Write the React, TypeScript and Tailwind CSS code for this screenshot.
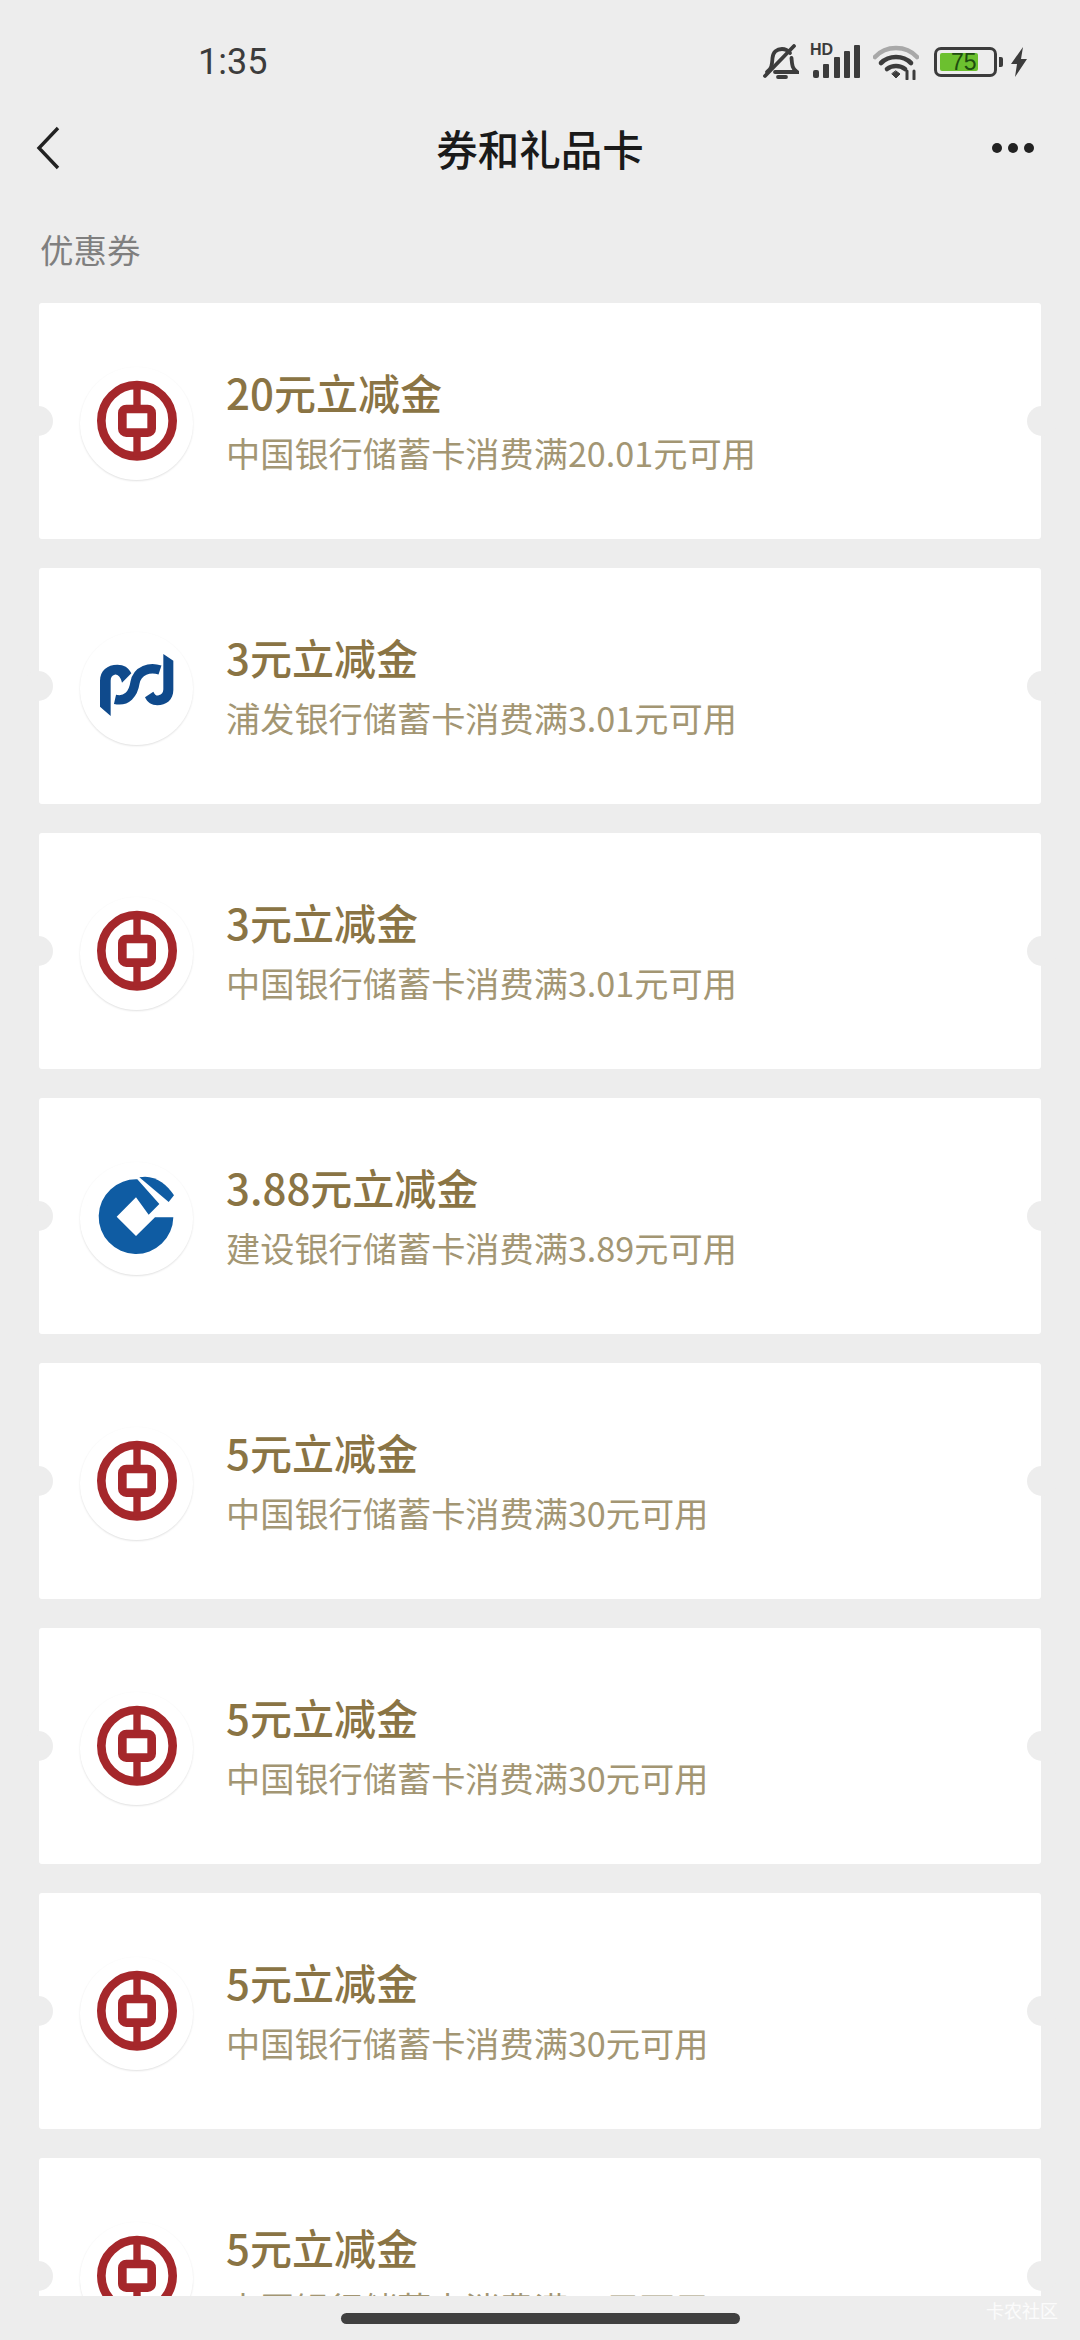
type Bank = "boc" | "spdb" | "ccb"

const coupons: { bank: Bank; title: string; desc: string }[] = [
    { bank: "boc", title: "20元立减金", desc: "中国银行储蓄卡消费满20.01元可用" },
    { bank: "spdb", title: "3元立减金", desc: "浦发银行储蓄卡消费满3.01元可用" },
    { bank: "boc", title: "3元立减金", desc: "中国银行储蓄卡消费满3.01元可用" },
    { bank: "ccb", title: "3.88元立减金", desc: "建设银行储蓄卡消费满3.89元可用" },
    { bank: "boc", title: "5元立减金", desc: "中国银行储蓄卡消费满30元可用" },
    { bank: "boc", title: "5元立减金", desc: "中国银行储蓄卡消费满30元可用" },
    { bank: "boc", title: "5元立减金", desc: "中国银行储蓄卡消费满30元可用" },
    { bank: "boc", title: "5元立减金", desc: "中国银行储蓄卡消费满30元可用" },
]

const BankLogo = ({ bank }: { bank: Bank }) => {
    if (bank === "boc") {
        return <svg viewBox="180 231 339 339" className="w-full h-full">
            <circle cx="351" cy="392" r="107" fill="none" stroke="#a5272b" strokeWidth="26" />
            <rect x="307" y="357" width="88" height="71" rx="12" fill="none" stroke="#a5272b" strokeWidth="26" />
            <rect x="340" y="285" width="22" height="65" fill="#a5272b" />
            <rect x="340" y="435" width="22" height="65" fill="#a5272b" />
        </svg>
    }
    if (bank === "spdb") {
        return <svg viewBox="180 126 339 339" className="w-full h-full">
            <path d="M240 350 V272 C240 242 262 224 292 224 C312 224 325 232 334 250 L306 278 C302 260 292 252 284 254 C276 256 272 262 272 272 V378 Z" fill="#0f4a8c" />
            <path d="M420 240 C390 230 352 240 345 278 C340 312 320 336 285 328" fill="none" stroke="#0f4a8c" strokeWidth="28" />
            <path d="M430 192 L460 212 V300 C460 330 438 346 412 346 C395 346 382 338 375 322 L400 305 C405 315 410 318 416 316 C425 314 430 308 430 298 Z" fill="#0f4a8c" />
        </svg>
    }
    return <svg viewBox="180 126 339 339" className="w-full h-full">
        <path d="M352 178 A112 112 0 1 0 460 292 L405 292 L348 348 L290 290 L348 232 L386 284 L418 252 Z" fill="#0f5ca3" />
        <path d="M358 172 C400 162 440 190 462 226 L446 246 Z" fill="#0f5ca3" />
    </svg>
}

const CouponCard = ({ bank, title, desc }: { bank: Bank; title: string; desc: string }) => {
    return <div className="relative h-[236px] shrink-0 bg-white rounded-[3px] flex items-center pl-[41px] pt-[4px]">
        <div className="absolute left-[-16px] top-[103px] w-[30px] h-[30px] rounded-full bg-[#ededed]"></div>
        <div className="absolute right-[-16px] top-[103px] w-[30px] h-[30px] rounded-full bg-[#ededed]"></div>
        <div className="w-[113px] h-[113px] rounded-full bg-white shadow-[0_1px_2px_rgba(0,0,0,0.12)] shrink-0">
            <BankLogo bank={bank} />
        </div>
        <div className="pl-[33px] mt-[-3px]">
            <div className="text-[42px] leading-[60px] font-medium text-[#8a7444]">{title}</div>
            <div className="text-[34.2px] leading-[60px] text-[#a39673]">{desc}</div>
        </div>
    </div>
}

const StatusIcons = () => {
    return <div className="flex items-center text-[#3c3c3c]">
        <svg viewBox="0 0 36 36" className="w-[36px] h-[36px]" fill="none" stroke="#3c3c3c" strokeWidth="3.8" strokeLinecap="round">
            <path d="M4 28 C9 25 9 20 9.5 14 C10 8 14 5 19 5 C22 5 25 6.5 27 9" />
            <path d="M28.5 14 C29 20 29 25 34 28 L12 28" />
            <path d="M2 32 L31 2" />
            <path d="M15 33 H23" />
        </svg>
        <div className="relative w-[50px] h-[34px] ml-[11px]">
            <div className="absolute left-0 top-[-3px] text-[16px] leading-[16px] font-bold font-['Liberation_Sans',sans-serif]">HD</div>
            <svg viewBox="0 0 50 34" className="w-[50px] h-[34px]" fill="#3c3c3c">
                <rect x="3" y="25" width="6" height="8" rx="2" />
                <rect x="13" y="19" width="6" height="14" rx="1" />
                <rect x="24" y="12" width="6" height="21" rx="1" />
                <rect x="34" y="6" width="6" height="27" rx="1" />
                <rect x="44" y="0" width="6" height="33" rx="1" />
            </svg>
        </div>
        <svg viewBox="0 0 46 36" className="w-[46px] h-[36px] ml-[13px]" fill="none" strokeLinecap="round">
            <path d="M2 13 C13 1 33 1 44 13" stroke="#a8a8a8" strokeWidth="4.6" />
            <path d="M8 19 C16 11 30 11 38 19" stroke="#3c3c3c" strokeWidth="4.6" />
            <path d="M14 25 C19 21 27 21 32 25" stroke="#3c3c3c" strokeWidth="4.6" />
            <path d="M19 30 L23 34 L27 30 L23 27 Z" fill="#3c3c3c" stroke="#3c3c3c" strokeWidth="1" />
            <path d="M34 27 V35 M41 27 V35" stroke="#3c3c3c" strokeWidth="3" />
        </svg>
        <div className="relative w-[63px] h-[30px] ml-[15px] rounded-[7px] border-[3px] border-[#3c3c3c] p-[3px]">
            <div className="w-[38px] h-full bg-[#6cc02f] rounded-[2px]"></div>
            <div className="absolute inset-0 pl-[14px] text-[23px] leading-[24px] text-[#1e4d10] font-['Liberation_Sans',sans-serif]">75</div>
        </div>
        <div className="w-[4px] h-[10px] ml-[2px] bg-[#3c3c3c] rounded-r-[2px]"></div>
        <svg viewBox="0 0 18 30" className="w-[18px] h-[30px] ml-[7px]" fill="#3c3c3c">
            <path d="M13 0 L1 17 L7 17 L5 30 L17 12 L11 12 Z" />
        </svg>
    </div>
}

export default function App() {
    return <div className="w-[1080px] h-[2340px] relative overflow-hidden bg-[#ededed] flex flex-col font-['Noto_Sans_CJK_SC','Noto_Sans',sans-serif]">
        <div className="h-[100px] shrink-0 pt-[44px] pl-[198px] pr-[52px]">
            <div className="h-[36px] flex items-center justify-between">
                <div className="text-[36px] leading-[36px] text-[#3c3c3c] font-['Roboto',sans-serif]">1:35</div>
                <StatusIcons />
            </div>
        </div>
        <div className="h-[96px] shrink-0 flex items-center justify-between pl-[36px] pr-[46px] relative">
            <svg viewBox="0 0 24 44" className="w-[24px] h-[44px]" fill="none" stroke="#222222" strokeWidth="3.4">
                <path d="M22 2 L3 22 L22 42" />
            </svg>
            <div className="absolute inset-x-0 text-center text-[41.5px] leading-[56px] font-medium text-[#1a1a1a]">券和礼品卡</div>
            <div className="flex gap-[6px]">
                <div className="w-[10px] h-[10px] rounded-full bg-[#222222]"></div>
                <div className="w-[10px] h-[10px] rounded-full bg-[#222222]"></div>
                <div className="w-[10px] h-[10px] rounded-full bg-[#222222]"></div>
            </div>
        </div>
        <div className="pt-[30px] pl-[40px] pb-[31px] text-[33.5px] leading-[46px] text-[#7f7f7f] shrink-0">优惠券</div>
        <div className="flex-1 min-h-0 overflow-hidden px-[39px] flex flex-col gap-[29px]">
            {coupons.map((c, i) => <CouponCard key={i} bank={c.bank} title={c.title} desc={c.desc} />)}
        </div>
        <div className="h-[44px] shrink-0 flex justify-center pt-[17px]">
            <div className="w-[399px] h-[11px] rounded-full bg-[#404040]"></div>
        </div>
        <div className="absolute right-[22px] bottom-[20px] text-[18px] leading-[20px] text-white/80">卡农社区</div>
    </div>
}
